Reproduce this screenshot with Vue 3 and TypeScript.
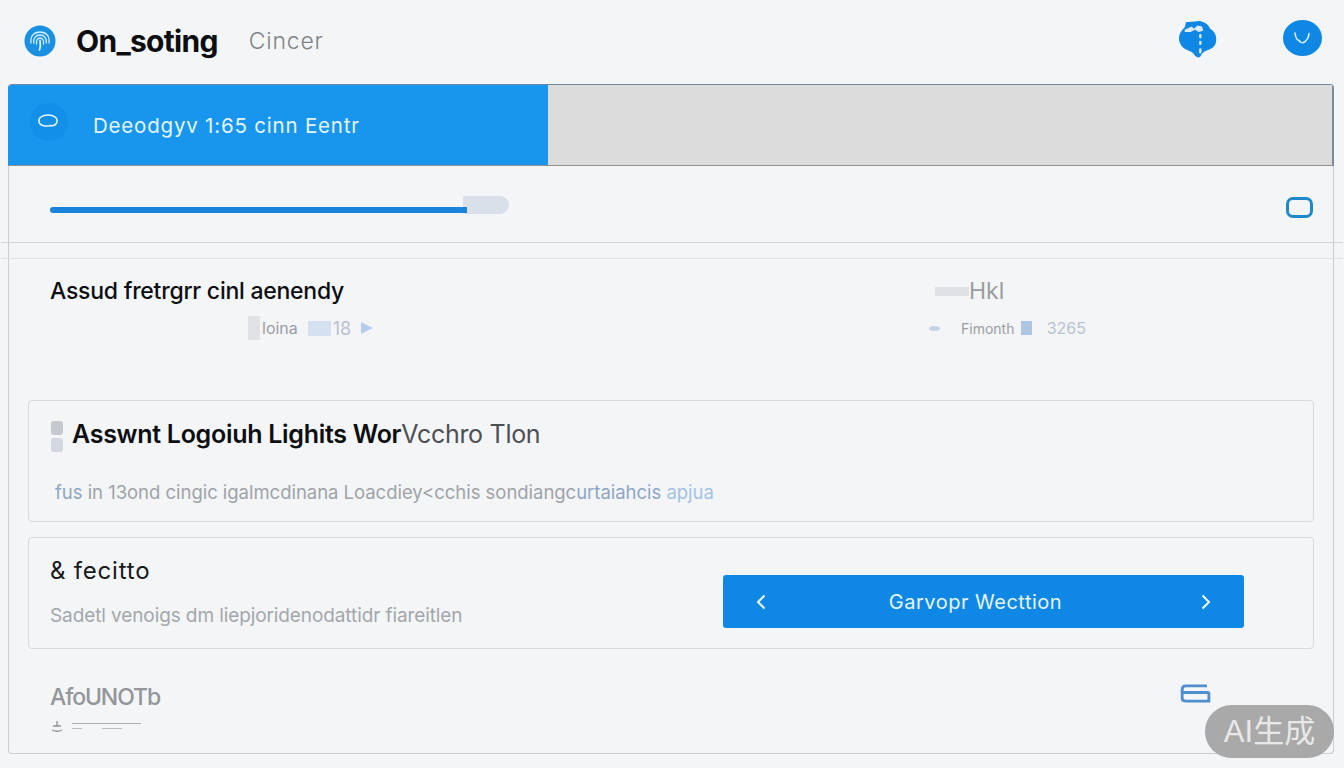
<script setup lang="ts">
const title = 'On_soting'
</script>

<template>
  <div class="page">
    <header class="top">
      <svg class="logo" viewBox="0 0 32 32" width="32" height="32">
        <circle cx="16" cy="16" r="15.500" fill="#1a90e2" />
        <g fill="none" stroke="#d5eefb" stroke-width="1.300" stroke-linecap="round">
          <path d="M7 18c-1-7 3-11 9-11s10 4 9 11" />
          <path d="M9.800 18c-.6-5 2-8 6.200-8s6.800 3 6.200 8" />
          <path d="M12.500 19c-.4-4 1-6 3.500-6s3.900 2 3.500 6" />
          <path d="M15.500 25c1-3 1-6.500.5-9.500" stroke-width="1.800" />
        </g>
      </svg>
      <span class="brand">{{ title }}</span>
      <span class="sub">Cincer</span>
      <span class="spacer"></span>
      <svg class="globe" viewBox="2 1 33 35" width="38" height="38" preserveAspectRatio="none">
        <path d="M8 3l12-1c5 1 8 4 9 7 5 3 6 8 5 13-1 4-4 6-8 7-2 1-4 2-5 5-1 2-3 2-5 0-1-2-3-4-6-5-5-2-8-6-8-11 0-5 3-8 5-10z" fill="#0f88e5" />
        <g fill="#dcebf5">
          <path d="M7 10l6-3 2 2 3-3 4 1 1 4-4 1-3-2-4 2-5 0z" />
          <rect x="19.500" y="14" width="2" height="4" rx="1" />
          <rect x="19.500" y="20" width="2" height="4" rx="1" />
          <rect x="19.500" y="27" width="2" height="5" rx="1" />
        </g>
      </svg>
      <svg class="avatar" viewBox="0 0 39 36" width="39" height="36">
        <ellipse cx="19.500" cy="18" rx="19.500" ry="18" fill="#0f88e5" />
        <path d="M12 13c.5 4 2 7 4 7.500 1 1.500 3 3 4.500 2 2-1 5-3.500 5.500-9" fill="none" stroke="#e3f1fb" stroke-width="1.500" stroke-linecap="round" />
      </svg>
    </header>

    <main class="panel">
      <section class="banner">
        <div class="banner-main">
          <span class="bubble">
            <svg viewBox="0 0 24 18" width="24" height="18">
              <path d="M3 10c-1-4 3-7 9-7s10 3 9 7c-1 3-4 4-7 3.500-3 1-10 1-11-3.500z" fill="none" stroke="#e9f6fe" stroke-width="1.500" />
            </svg>
          </span>
          <span class="banner-text">Deeodgyv 1:65 cinn Eentr</span>
        </div>
        <div class="banner-rest"></div>
      </section>

      <section class="progress-row">
        <div class="track"><div class="fill"></div></div>
        <span class="outline-icon"></span>
      </section>

      <div class="band"></div>

      <section class="summary">
        <div class="summary-left">
          <h2 class="summary-title">Assud fretrgrr cinl aenendy</h2>
          <div class="meta meta-left">
            <i class="smudge"></i>
            <span>loina</span>
            <i class="chip"></i>
            <span class="num">18</span>
            <i class="tri"></i>
          </div>
        </div>
        <div class="summary-right">
          <div class="right-title"><i class="smudge-wide"></i><span>Hkl</span></div>
          <div class="meta meta-right">
            <i class="dot"></i>
            <span>Fimonth</span>
            <i class="square"></i>
            <span class="num">3265</span>
          </div>
        </div>
      </section>

      <section class="card card-a">
        <div class="card-a-head">
          <span class="pips"><i></i><i></i></span>
          <h3>Asswnt Logoiuh Lighits <span class="wor">Wor</span><span class="fade">Vcchro Tlon</span></h3>
        </div>
        <p class="card-a-copy">
          <span class="tint">fus</span> in 13ond cingic igalmcdinana Loacdiey&lt;cchis sondiangc<span class="tint">urtaiahcis</span>
          <span class="blue"> apjua</span>
        </p>
      </section>

      <section class="card card-b">
        <div class="card-b-text">
          <h3>&amp; fecitto</h3>
          <p>Sadetl venoigs dm liepjoridenodattidr fiareitlen</p>
        </div>
        <button class="cta" type="button">
          <svg viewBox="0 0 12 16" width="12" height="16"><path d="M9.500 1.500L3 8l6.500 6.500" fill="none" stroke="#f1f9fe" stroke-width="2" /></svg>
          <span class="cta-label">Garvopr Wecttion</span>
          <svg viewBox="0 0 12 16" width="12" height="16"><path d="M2.500 1.500L9 8l-6.500 6.500" fill="none" stroke="#f1f9fe" stroke-width="2" /></svg>
        </button>
      </section>

      <footer class="foot">
        <div class="foot-left">
          <span class="foot-title">AfoUNOTb</span>
          <div class="foot-sub">
            <svg viewBox="0 0 14 12" width="14" height="12">
              <path d="M7 1v5M3 6h8M2 10c3 1.500 7 1.500 10 0" fill="none" stroke="#8c9197" stroke-width="1.300" />
            </svg>
            <span class="rules"><i class="rule"></i><i class="dashes"></i></span>
          </div>
        </div>
        <svg class="foot-icon" viewBox="0 0 32 22" width="31" height="21">
          <path d="M28 3H6C3 3 2 5 2 7v9c0 2 1 3 4 3h24v-8c0-1-1-1-2-1H3" fill="none" stroke="#4f8fd0" stroke-width="3" />
        </svg>
      </footer>
    </main>

    <div class="ai-badge">AI生成</div>
  </div>
</template>

<style>
html,
body {
  margin: 0;
  background: #f4f5f7;
}
</style>

<style scoped>
.page {
  position: relative;
  box-sizing: border-box;
  width: 1344px;
  height: 768px;
  padding: 0 10px 14px 8px;
  overflow: hidden;
  display: flex;
  flex-direction: column;
  background: #f4f5f7;
  font-family: Inter, "Liberation Sans", "Noto Sans CJK SC", sans-serif;
  color: #0c0e11;
}
.top {
  flex: 0 0 84px;
  box-sizing: border-box;
  display: flex;
  align-items: center;
  padding: 0 12px 2px 16px;
}
.logo {
  margin-right: 20px;
}
.brand {
  font-size: 30px;
  font-weight: 700;
  letter-spacing: -0.700px;
  margin-right: 31px;
}
.sub {
  font-size: 23px;
  font-weight: 300;
  letter-spacing: 0.800px;
  color: #7f8488;
}
.spacer {
  flex: 1;
}
.globe {
  margin: 0 66px 4px 0;
}
.avatar {
  margin-bottom: 6px;
}
.panel {
  flex: 1;
  min-height: 0;
  display: flex;
  flex-direction: column;
  box-sizing: border-box;
  border: 1px solid #c9ccd0;
  border-top: 0;
  border-radius: 4px;
}
.banner {
  flex: 0 0 82px;
  display: flex;
  margin: 0 -1px;
  border-radius: 4px 4px 0 0;
  overflow: hidden;
  border-top: 1px solid #6f8ba3;
  border-bottom: 1px solid #8d9194;
  box-sizing: border-box;
}
.banner-main {
  flex: 0 0 540px;
  display: flex;
  align-items: center;
  padding-left: 22px;
  box-sizing: border-box;
  background: #1896ee;
}
.bubble {
  width: 38px;
  height: 38px;
  border-radius: 50%;
  background: #128fe9;
  display: flex;
  align-items: center;
  justify-content: center;
  margin: -6px 25px 0 0;
}
.bubble svg {
  margin: -2px 2px 0 0;
}
.banner-text {
  font-size: 20.500px;
  font-weight: 400;
  letter-spacing: 0.800px;
  color: #e5f5fe;
}
.banner-rest {
  flex: 1;
  background: #dcdcdd;
  border-right: 2px solid #7e8b98;
}
.progress-row {
  flex: 0 0 76px;
  display: flex;
  align-items: center;
  padding: 2px 20px 0 41px;
  box-sizing: border-box;
  justify-content: space-between;
}
.track {
  width: 459px;
  height: 18px;
  border-radius: 9px;
  background: linear-gradient(to right, transparent 90%, #d9e0ea 90%);
  display: flex;
  align-items: flex-end;
}
.fill {
  width: 417px;
  height: 6px;
  margin-bottom: 1px;
  border-radius: 3px 0 0 3px;
  background: #1a84dc;
}
.outline-icon {
  box-sizing: border-box;
  width: 27px;
  height: 21px;
  border: 3px solid #1f88c9;
  border-radius: 7px;
  margin-top: 4px;
}
.band {
  position: relative;
  flex: 0 0 17px;
}
.band::before,
.band::after {
  content: "";
  position: absolute;
  left: -8px;
  right: -10px;
  height: 1px;
}
.band::before {
  top: 0;
  background: #d2d4d7;
}
.band::after {
  bottom: 0;
  background: #dfe1e3;
}
.summary {
  flex: 0 0 141px;
  display: flex;
  justify-content: space-between;
  padding: 18px 247px 0 41px;
  box-sizing: border-box;
}
.summary-title {
  margin: 0;
  font-size: 23px;
  line-height: 28px;
  font-weight: 500;
  letter-spacing: -0.250px;
}
.meta {
  display: flex;
  align-items: center;
  font-size: 16px;
  color: #9a9ea4;
  height: 24px;
  margin-top: 11px;
}
.meta-left {
  padding-left: 198px;
  gap: 10px;
}
.smudge {
  width: 12px;
  height: 24px;
  background: #e1e2e5;
  margin-right: -8px;
}
.chip {
  width: 23px;
  height: 15px;
  background: #d5e0f1;
}
.num {
  color: #b8c2d2;
  margin-left: -8px;
}
.tri {
  width: 0;
  height: 0;
  margin-left: -4px;
  border-left: 12px solid #b6cdee;
  border-top: 6px solid transparent;
  border-bottom: 6px solid transparent;
}
.meta-left .num {
  font-size: 18px;
  margin-right: 4px;
}
.summary-right {
  width: 157px;
}
.right-title {
  display: flex;
  align-items: center;
  height: 28px;
  padding-left: 6px;
  font-size: 23px;
  color: #9a9da1;
}
.smudge-wide {
  width: 34px;
  height: 9px;
  background: #dfe1e4;
}
.meta-right {
  font-size: 14px;
}
.dot {
  width: 11px;
  height: 5px;
  border-radius: 50%;
  background: #c4d3e4;
  margin-right: 21px;
}
.square {
  width: 11px;
  height: 14px;
  background: #afc6e2;
  margin-left: 7px;
}
.meta-right .num {
  margin-left: auto;
  font-size: 16px;
}
.card {
  margin: 0 19px;
  border: 1px solid #d7d9dc;
  border-radius: 4px;
  box-sizing: border-box;
}
.card-a {
  flex: 0 0 122px;
  padding: 17px 22px 0;
}
.card-a-head {
  display: flex;
  align-items: flex-start;
  gap: 9px;
  height: 32px;
}
.card-a-head h3 {
  margin: 0;
  font-size: 25px;
  line-height: 32px;
  font-weight: 600;
  letter-spacing: -0.290px;
  white-space: nowrap;
}
.fade {
  font-weight: 400;
  color: #4c5055;
}
.pips {
  display: flex;
  flex-direction: column;
  gap: 3px;
  margin-top: 3px;
}
.pips i {
  width: 12px;
  height: 14px;
  border-radius: 3px;
  background: #c5c8cc;
}
.pips i:last-child {
  background: #d3d7e0;
}
.card-a-copy {
  margin: 30px 0 0 4px;
  font-size: 18.500px;
  line-height: 24px;
  letter-spacing: -0.030px;
  color: #9ea3a9;
  white-space: nowrap;
}
.tint {
  color: #8ea6c6;
}
.blue {
  color: #a2c2e8;
}
.card-b {
  flex: 0 0 112px;
  margin-top: 15px;
  display: flex;
  align-items: flex-start;
  justify-content: space-between;
  padding: 0 69px 0 21px;
}
.card-b-text {
  margin-top: 19px;
}
.card-b-text h3 {
  margin: 0;
  font-size: 24px;
  line-height: 28px;
  font-weight: 400;
  letter-spacing: 0.800px;
  color: #17191c;
}
.card-b-text p {
  margin: 19px 0 0;
  font-size: 19px;
  line-height: 24px;
  letter-spacing: -0.100px;
  color: #a3a7ac;
  white-space: nowrap;
}
.cta {
  width: 521px;
  height: 53px;
  border: 0;
  border-radius: 3px;
  background: #0f88e5;
  color: #e8f5fd;
  display: flex;
  align-items: center;
  justify-content: space-between;
  padding: 0 32px;
  font-family: inherit;
  font-size: 20px;
  letter-spacing: 0.500px;
  margin-top: 37px;
}
.cta-label {
  margin-right: 16px;
}
.foot {
  flex: 1;
  display: flex;
  align-items: flex-start;
  justify-content: space-between;
  padding: 0 122px 0 41px;
}
.foot-left {
  margin-top: 34px;
}
.foot-title {
  display: block;
  font-size: 23px;
  line-height: 28px;
  font-weight: 500;
  color: #92969b;
  letter-spacing: -1.100px;
}
.foot-sub {
  display: flex;
  align-items: center;
  gap: 8px;
  margin-top: 9px;
}
.rules {
  display: flex;
  flex-direction: column;
  gap: 4px;
}
.rule {
  width: 69px;
  height: 1px;
  background: #a9adb2;
}
.dashes {
  width: 50px;
  height: 1px;
  background: linear-gradient(to right, #b9bcc0 20%, transparent 20% 60%, #b9bcc0 60%);
}
.foot-icon {
  margin-top: 34px;
}
.ai-badge {
  position: absolute;
  left: 1205px;
  top: 705px;
  width: 129px;
  height: 53px;
  border-radius: 27px;
  background: #a9a9a9;
  color: #e8e8e8;
  font-size: 31px;
  line-height: 53px;
  text-align: center;
  font-family: "Liberation Sans", "Noto Sans CJK SC", sans-serif;
}
</style>
